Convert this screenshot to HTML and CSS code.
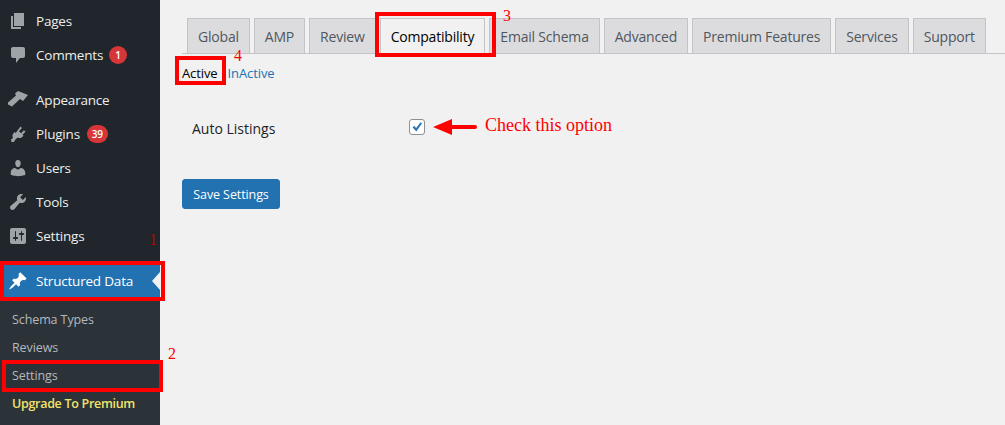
FILE: index.html
```html
<!DOCTYPE html>
<html lang="en">
<head>
<meta charset="utf-8">
<title>Structured Data Settings</title>
<link rel="stylesheet" href="styles.css">
</head>
<body>
<div class="page">
  <aside class="sidebar">
    <nav class="menu">
      <a class="item item-first"><svg class="ico" viewBox="0 0 20 20"><path d="M6 15V2h10v13H6zm-1 1h8v2H3V5h2v11z"/></svg>Pages</a>
      <a class="item"><svg class="ico" viewBox="0 0 20 20"><path d="M5 2h10c1.100 0 2 .9 2 2v7c0 1.100-.9 2-2 2h-3l-4 5v-5H5c-1.100 0-2-.9-2-2V4c0-1.100.9-2 2-2z"/></svg>Comments<span class="badge">1</span></a>
      <a class="item item-gap"><svg class="ico" viewBox="0 0 20 20"><path d="M10 1l10 4-5 6-3-2-8 7.500-4-2v-2l8-7-1-2z"/></svg>Appearance</a>
      <a class="item"><svg class="ico" viewBox="0 0 20 20"><path d="M12.500 2.500L14 4l-3 3.200 2 2 3-3 1.500 1.500-3 3 1 1-1 1c-1.500 1.500-3.500 1.500-5 .7L7 16l-1 2H3.500L3 15.500 5 14c-.8-1.500-.8-3.500.7-5l1-1 1 1z"/></svg>Plugins<span class="badge badge-wide">39</span></a>
      <a class="item"><svg class="ico" viewBox="0 0 20 20"><path d="M10 9.250c-2.270 0-2.730-3.440-2.730-3.440C7 4.020 7.820 2 9.970 2c2.160 0 2.980 2.020 2.710 3.810 0 0-.41 3.440-2.680 3.440zm0 2.570L12.720 10c2.390 0 4.520 2.330 4.520 4.530v2.490s-3.650 1.130-7.240 1.130c-3.650 0-7.240-1.130-7.240-1.130v-2.490c0-2.250 1.940-4.480 4.150-4.480z"/></svg>Users</a>
      <a class="item"><svg class="ico" viewBox="0 0 20 20"><path d="M16.680 9.770c-1.340 1.340-3.300 1.670-4.950.99l-5.410 6.520c-.99.99-2.590.99-3.570 0-.99-.98-.99-2.580 0-3.570l6.520-5.420c-.68-1.650-.35-3.610.99-4.950 1.280-1.280 3.120-1.620 4.720-1.060l-2.890 2.890 2.820 2.820 2.860-2.870c.53 1.580.18 3.400-1.090 4.670z"/></svg>Tools</a>
      <a class="item"><svg class="ico" viewBox="0 0 20 20"><path d="M18 16V4c0-1.100-.9-2-2-2H4c-1.100 0-2 .9-2 2v12c0 1.100.9 2 2 2h12c1.100 0 2-.9 2-2zM8 11h1c.55 0 1 .45 1 1s-.45 1-1 1H8v1.500c0 .28-.22.5-.5.5s-.5-.22-.5-.5V13H6c-.55 0-1-.45-1-1s.45-1 1-1h1V5.500c0-.28.22-.5.5-.5s.5.22.5.5V11zm5-2h-1c-.55 0-1-.45-1-1s.45-1 1-1h1V5.500c0-.28.22-.5.5-.5s.5.22.5.5V7h1c.55 0 1 .45 1 1s-.45 1-1 1h-1v5.500c0 .28-.22.5-.5.5s-.5-.22-.5-.5V9z"/></svg>Settings</a>
      <a class="item item-active"><svg class="ico" viewBox="0 0 20 20"><path d="M10.440 3.020l1.820-1.820 6.360 6.350-1.830 1.820c-1.050-.68-2.480-.57-3.410.36l-.75.75c-.92.93-1.040 2.350-.35 3.400l-1.830 1.820-2.410-2.410-2.800 2.790c-.42.42-3.380 2.710-3.800 2.290s1.860-3.390 2.280-3.810l2.790-2.790L4.100 9.360l1.830-1.820c1.050.69 2.480.57 3.400-.36l.75-.75c.93-.92 1.050-2.350.36-3.410z"/></svg>Structured Data</a>
      <div class="submenu">
        <a class="sub">Schema Types</a>
        <a class="sub">Reviews</a>
        <a class="sub">Settings</a>
        <a class="sub sub-premium">Upgrade To Premium</a>
      </div>
    </nav>
  </aside>
  <main class="content">
    <div class="tabs">
      <a class="tab">Global</a>
      <a class="tab">AMP</a>
      <a class="tab">Review</a>
      <a class="tab tab-active">Compatibility</a>
      <a class="tab">Email Schema</a>
      <a class="tab">Advanced</a>
      <a class="tab">Premium Features</a>
      <a class="tab">Services</a>
      <a class="tab">Support</a>
    </div>
    <div class="subtabs"><a class="subtab subtab-on">Active</a><a class="subtab">InActive</a></div>
    <div class="field">
      <label class="field-label">Auto Listings</label>
      <span class="checkbox"><svg viewBox="0 0 16 16" class="check"><path d="M3 8.500l1.800-1.800L7 9l5-6.500 1.800 1.300L7.200 13z"/></svg></span>
    </div>
    <button class="save">Save Settings</button>
  </main>
  <div class="mark mark-1"></div>
  <div class="mark mark-2"></div>
  <div class="mark mark-3"></div>
  <div class="mark mark-4"></div>
  <span class="num num-1">1</span>
  <span class="num num-2">2</span>
  <span class="num num-3">3</span>
  <span class="num num-4">4</span>
  <svg class="arrow" viewBox="0 0 44 16"><path d="M0 8L19 0v6h23a2 2 0 0 1 0 4H19v6z"/></svg>
  <span class="note">Check this option</span>
  <span class="caret"></span>
</div>
</body>
</html>
```
FILE: styles.css
```css
* { box-sizing: border-box; }
html, body { margin: 0; padding: 0; }
body { background: #f1f1f1; font-family: "Open Sans", "Noto Sans", sans-serif; font-size: 13px; }
.page { position: relative; width: 1005px; height: 425px; overflow: hidden; display: flex; }
.sidebar { width: 160px; flex: none; background: #20262b; color: #eee; }
.menu { display: flex; flex-direction: column; }
.item { display: flex; align-items: center; height: 34px; padding-left: 8px; gap: 8px; font-size: 13.500px; color: #eee; letter-spacing: -.2px; }
.item-first { margin-top: 4px; }
.item-gap { margin-top: 11px; }
.ico { width: 20px; height: 20px; fill: #9ea3a8; flex: none; }
.badge { margin-left: -2px; min-width: 18px; height: 18px; padding: 0 5px; border-radius: 9px; background: #d63638; color: #fff; font-size: 10px; font-weight: 600; line-height: 18px; text-align: center; letter-spacing: 0; }
.badge-wide { width: 21px; padding: 0; margin-left: -1px; }
.item-active { background: #2271b1; color: #fff; height: 36px; margin-top: 10px; }
.item-active .ico { fill: #fff; }
.submenu { display: flex; flex-direction: column; background: #2c3338; padding: 7px 0; height: 126px; }
.sub { height: 28px; line-height: 28px; padding-left: 12px; color: #b4b9be; font-size: 12.500px; letter-spacing: -.1px; }
.sub-premium { color: #f0e36a; font-weight: 600; letter-spacing: -.3px; }
.content { flex: 1; padding: 18px 0 0 22px; min-width: 0; }
.tabs { display: flex; gap: 4px; height: 36px; padding-left: 5px; border-bottom: 1px solid #c3c4c7; }
.tab { height: 36px; padding: 0 10px; display: flex; align-items: center; justify-content: center; border: 1px solid #c3c4c7; background: #dcdcde; color: #50575e; font-size: 14px; font-weight: 500; letter-spacing: -.2px; white-space: nowrap; }
.tab-active { background: #f1f1f1; color: #000; border-bottom-color: #f1f1f1; }
.subtabs { display: flex; gap: 10px; margin-top: 10px; height: 18px; align-items: center; }
.subtab { font-size: 13px; color: #2271b1; letter-spacing: -.1px; }
.subtab-on { color: #000; font-weight: 500; }
.field { display: flex; align-items: center; margin-top: 31px; height: 30px; padding-left: 10px; }
.field-label { width: 217px; font-size: 14px; font-weight: 500; color: #1d2327; }
.checkbox { width: 16px; height: 16px; border: 1px solid #8c8f94; border-radius: 3px; background: #fff; display: flex; align-items: center; justify-content: center; margin-top: -3px; }
.check { width: 14px; height: 14px; fill: #2c76b8; }
.save { display: block; margin-top: 36px; width: 98px; height: 30px; padding: 0; border: 1px solid #2271b1; border-radius: 3px; background: #2271b1; color: #fff; font-family: inherit; font-size: 12.500px; letter-spacing: -.1px; }
.mark { position: absolute; border: 4px solid #f00; }
.mark-1 { left: 0; top: 261px; width: 165px; height: 40px; }
.mark-2 { left: 2px; top: 360px; width: 161px; height: 32px; }
.mark-3 { left: 375px; top: 12px; width: 121px; height: 45px; }
.mark-4 { left: 175px; top: 56px; width: 51px; height: 29px; }
.num { position: absolute; color: #f00; font-family: "Liberation Serif", serif; font-size: 16px; line-height: 18px; }
.num-1 { left: 149px; top: 231px; color: #c00000; }
.num-2 { left: 168px; top: 345px; }
.num-3 { left: 503px; top: 7px; }
.num-4 { left: 234px; top: 47px; }
.arrow { position: absolute; left: 433px; top: 119px; width: 44px; height: 16px; fill: #f00; }
.note { position: absolute; left: 485px; top: 115px; color: #f00; font-family: "Liberation Serif", serif; font-size: 18px; line-height: 21px; }
.caret { position: absolute; left: 152px; top: 272px; border: 9px solid transparent; border-left: 0; border-right: 8px solid #f1f1f1; }
```
